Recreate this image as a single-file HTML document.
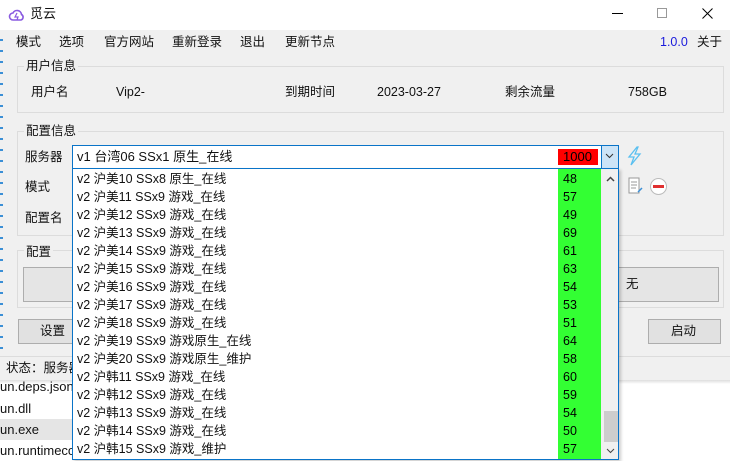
<!DOCTYPE html>
<html><head><meta charset="utf-8"><style>
*{margin:0;padding:0;box-sizing:border-box}
body{width:730px;height:461px;overflow:hidden;background:#fff;font-family:"Liberation Sans","Noto Sans CJK SC",sans-serif;font-size:12.5px;color:#111;position:relative}
.a{position:absolute;white-space:nowrap;line-height:17px}
.win{position:absolute;left:0;top:0;width:730px;height:380px;background:#f0f0f0}
.tb{position:absolute;left:0;top:0;width:730px;height:30px;background:#fff}
.grp{position:absolute;border:1px solid #dcdcdc}
.btn{position:absolute;background:#e1e1e1;border:1px solid #adadad}
.row{position:absolute;left:0;width:486px;height:18px;line-height:18px;padding-left:4px}
.num{position:absolute;left:486px;width:42px;height:18px;line-height:18px;padding-left:4px;color:#000}
</style></head><body>
<div class="win"></div>
<div class="tb"></div>
<svg class="a" style="left:8px;top:6px" width="18" height="18" viewBox="0 0 18 18"><path d="M5 14a3.5 3.5 0 0 1 0-7 4.5 4.5 0 0 1 8.5 1.5A3 3 0 0 1 13 14z" fill="none" stroke="#8a5be0" stroke-width="1.6"/><path d="M9 7l-2 4h3l-1 3" fill="none" stroke="#8a5be0" stroke-width="1.2"/></svg>
<div class="a" style="left:30px;top:5px;font-size:13px">觅云</div>
<div class="a" style="left:612px;top:13px;width:11px;height:1px;background:#000"></div>
<div class="a" style="left:657px;top:8px;width:10px;height:10px;border:1px solid #999"></div>
<svg class="a" style="left:702px;top:8px" width="11" height="11" viewBox="0 0 11 11"><path d="M0.5 0.5l10 10M10.5 0.5l-10 10" stroke="#000" stroke-width="1"/></svg>
<div class="a" style="left:0;top:30px;width:3px;height:327px;background:repeating-linear-gradient(#f0f0f0 0 9px,#3b8fd6 9px 11px)"></div>
<div class="a" style="left:16px;top:34px">模式</div>
<div class="a" style="left:59px;top:34px">选项</div>
<div class="a" style="left:104px;top:34px">官方网站</div>
<div class="a" style="left:172px;top:34px">重新登录</div>
<div class="a" style="left:240px;top:34px">退出</div>
<div class="a" style="left:285px;top:34px">更新节点</div>
<div class="a" style="left:660px;top:34px;color:#1a1adc">1.0.0</div>
<div class="a" style="left:697px;top:34px">关于</div>

<div class="grp" style="left:17px;top:66px;width:707px;height:47px"></div>
<div class="a" style="left:24px;top:58px;background:#f0f0f0;padding:0 2px">用户信息</div>
<div class="a" style="left:31px;top:84px">用户名</div>
<div class="a" style="left:116px;top:84px">Vip2-</div>
<div class="a" style="left:285px;top:84px">到期时间</div>
<div class="a" style="left:377px;top:84px">2023-03-27</div>
<div class="a" style="left:505px;top:84px">剩余流量</div>
<div class="a" style="left:628px;top:84px">758GB</div>

<div class="grp" style="left:17px;top:131px;width:707px;height:105px"></div>
<div class="a" style="left:24px;top:123px;background:#f0f0f0;padding:0 2px">配置信息</div>
<div class="a" style="left:25px;top:149px">服务器</div>
<div class="a" style="left:25px;top:179px">模式</div>
<div class="a" style="left:25px;top:210px">配置名</div>

<div class="grp" style="left:17px;top:250px;width:707px;height:58px"></div>
<div class="a" style="left:24px;top:244px;background:#f0f0f0;padding:0 2px">配置</div>
<div class="btn" style="left:23px;top:267px;width:696px;height:35px;background:#e5e5e5"></div>
<div class="a" style="left:626px;top:276px">无</div>
<div class="btn" style="left:18px;top:319px;width:55px;height:25px"></div>
<div class="a" style="left:40px;top:323px">设置</div>
<div class="btn" style="left:648px;top:319px;width:73px;height:25px"></div>
<div class="a" style="left:671px;top:323px">启动</div>
<div class="a" style="left:0;top:356px;width:730px;height:1px;background:#dcdcdc"></div>
<div class="a" style="left:6px;top:360px">状态：服务器</div>
<div class="a" style="left:0;top:380px;width:730px;height:4px;background:linear-gradient(#ddd,#fff)"></div>
<div class="a" style="left:0;top:419px;width:80px;height:21px;background:#e5e5e5"></div>
<div class="a" style="left:0;top:378px;font-size:13px">un.deps.json</div>
<div class="a" style="left:0;top:400px;font-size:13px">un.dll</div>
<div class="a" style="left:0;top:421px;font-size:13px">un.exe</div>
<div class="a" style="left:0;top:442px;font-size:13px">un.runtimeco</div>

<svg class="a" style="left:626px;top:146px" width="18" height="20" viewBox="0 0 18 20"><path d="M11 1L3 11h5l-3 8 9-11H9l3-7z" fill="none" stroke="#5bc0f0" stroke-width="1.3"/></svg>
<svg class="a" style="left:626px;top:176px" width="20" height="20" viewBox="0 0 20 20"><path d="M3 2h10v15H3z" fill="#fff" stroke="#999"/><path d="M5 6h6M5 9h6M5 12h5" stroke="#999"/><path d="M12 16l4-4" stroke="#3b8fd6" stroke-width="1.5"/></svg>
<svg class="a" style="left:649px;top:177px" width="19" height="19" viewBox="0 0 19 19"><circle cx="9.5" cy="9.5" r="8" fill="#fff" stroke="#bbb"/><rect x="4" y="8" width="11" height="3" fill="#e03030"/></svg>

<div class="a" style="left:72px;top:145px;width:547px;height:24px;background:#fff;border:1px solid #0a74c8"></div>
<div class="a" style="left:77px;top:148px;font-size:13px">v1 台湾06 SSx1 原生_在线</div>
<div class="a" style="left:558px;top:149px;width:40px;height:16px;background:#f00;color:#000;font-size:13px;padding-left:5px;line-height:16px">1000</div>
<div class="a" style="left:601px;top:146px;width:17px;height:22px;background:#cce4f7;border-left:1px solid #0a74c8"></div>
<svg class="a" style="left:605px;top:153px" width="9" height="6" viewBox="0 0 9 6"><path d="M1 1l3.5 3.5L8 1" fill="none" stroke="#333"/></svg>

<div class="a" style="left:72px;top:168px;width:547px;height:292px;background:#fff;border:1px solid #0a74c8;box-shadow:2px 2px 3px rgba(0,0,0,.2);overflow:hidden">
<div class="a" style="left:485px;top:0;width:43px;height:292px;background:#33ff33"></div>
<div class="a" style="left:528px;top:0;width:18px;height:292px;background:#f0f0f0"></div>
<div class="a" style="left:531px;top:242px;width:14px;height:31px;background:#cdcdcd"></div>
<svg class="a" style="left:533px;top:7px" width="9" height="6" viewBox="0 0 9 6"><path d="M1 5l3.5-3.5L8 5" fill="none" stroke="#444" stroke-width="1.5"/></svg>
<svg class="a" style="left:533px;top:279px" width="9" height="6" viewBox="0 0 9 6"><path d="M1 1l3.5 3.5L8 1" fill="none" stroke="#444"/></svg>
<div style="position:absolute;left:0;top:0">
<div class="row" style="top:1px">v2 沪美10 SSx8 原生_在线</div><div class="num" style="top:1px">48</div>
<div class="row" style="top:19px">v2 沪美11 SSx9 游戏_在线</div><div class="num" style="top:19px">57</div>
<div class="row" style="top:37px">v2 沪美12 SSx9 游戏_在线</div><div class="num" style="top:37px">49</div>
<div class="row" style="top:55px">v2 沪美13 SSx9 游戏_在线</div><div class="num" style="top:55px">69</div>
<div class="row" style="top:73px">v2 沪美14 SSx9 游戏_在线</div><div class="num" style="top:73px">61</div>
<div class="row" style="top:91px">v2 沪美15 SSx9 游戏_在线</div><div class="num" style="top:91px">63</div>
<div class="row" style="top:109px">v2 沪美16 SSx9 游戏_在线</div><div class="num" style="top:109px">54</div>
<div class="row" style="top:127px">v2 沪美17 SSx9 游戏_在线</div><div class="num" style="top:127px">53</div>
<div class="row" style="top:145px">v2 沪美18 SSx9 游戏_在线</div><div class="num" style="top:145px">51</div>
<div class="row" style="top:163px">v2 沪美19 SSx9 游戏原生_在线</div><div class="num" style="top:163px">64</div>
<div class="row" style="top:181px">v2 沪美20 SSx9 游戏原生_维护</div><div class="num" style="top:181px">58</div>
<div class="row" style="top:199px">v2 沪韩11 SSx9 游戏_在线</div><div class="num" style="top:199px">60</div>
<div class="row" style="top:217px">v2 沪韩12 SSx9 游戏_在线</div><div class="num" style="top:217px">59</div>
<div class="row" style="top:235px">v2 沪韩13 SSx9 游戏_在线</div><div class="num" style="top:235px">54</div>
<div class="row" style="top:253px">v2 沪韩14 SSx9 游戏_在线</div><div class="num" style="top:253px">50</div>
<div class="row" style="top:271px">v2 沪韩15 SSx9 游戏_维护</div><div class="num" style="top:271px">57</div>
</div></div>
</body></html>
